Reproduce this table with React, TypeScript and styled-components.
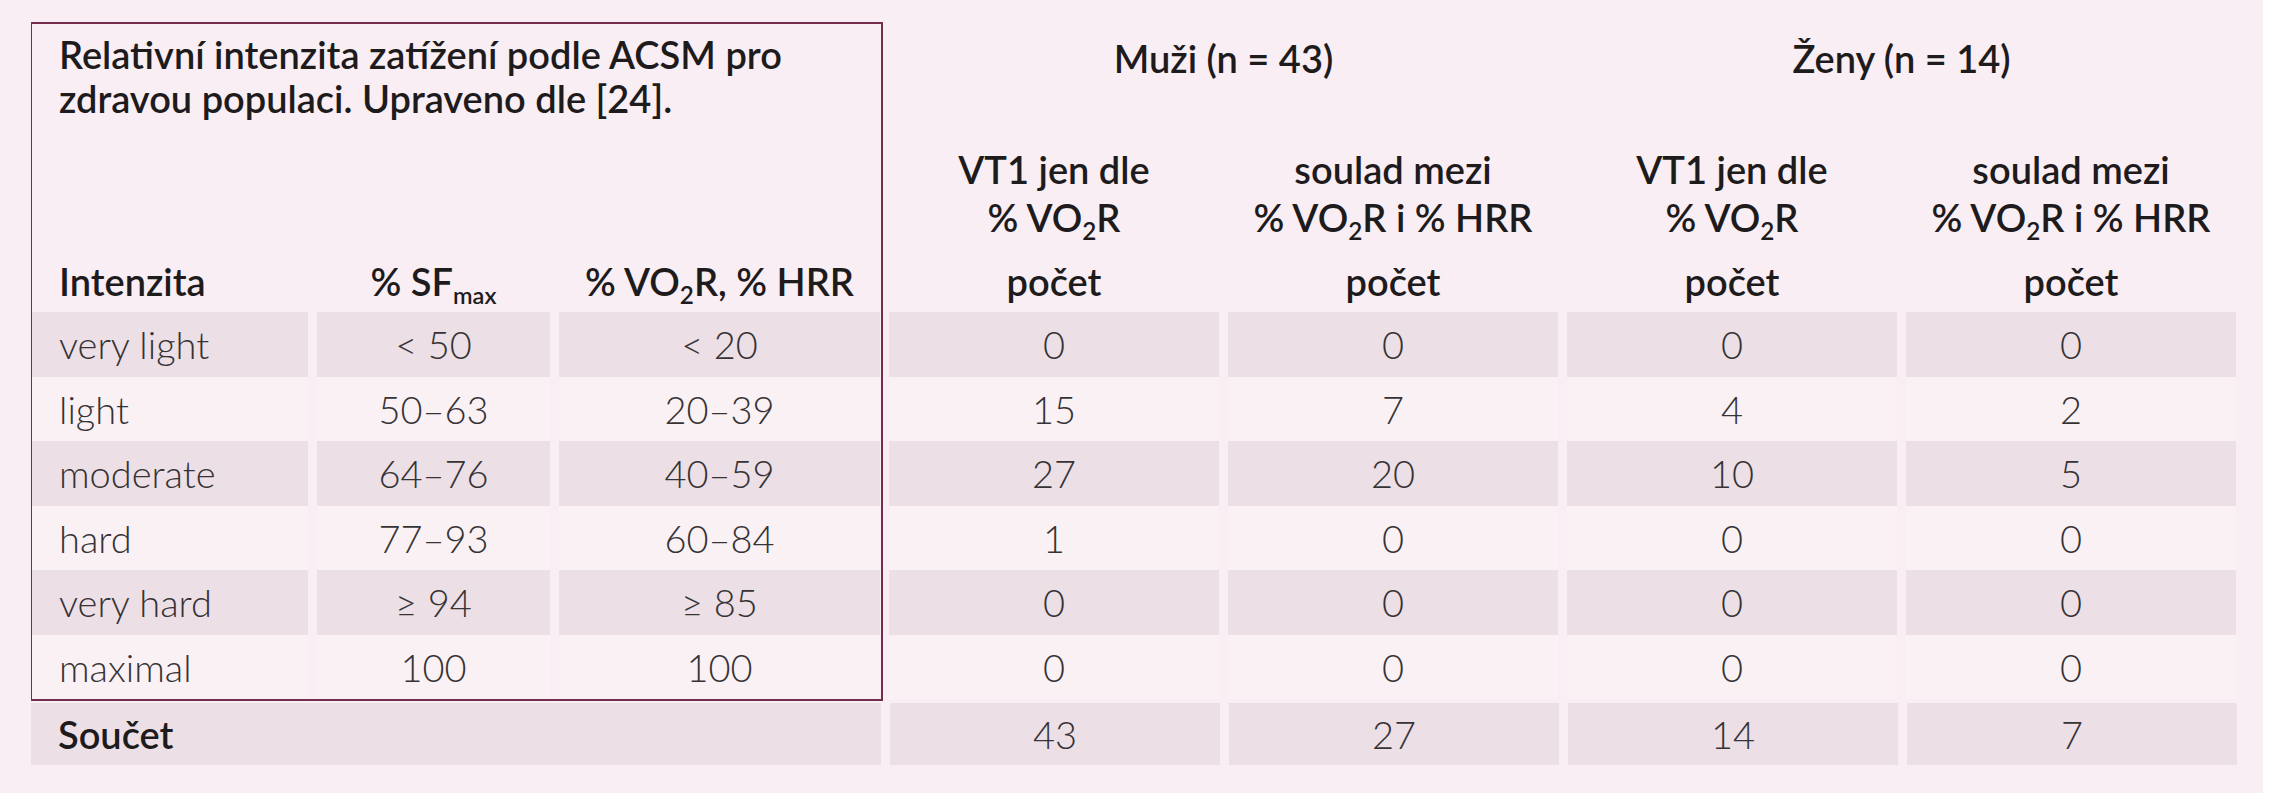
import React, { FC } from "react";
import styled, { createGlobalStyle } from "styled-components";

const GlobalStyle = createGlobalStyle`
  html, body {
    margin: 0;
    padding: 0;
    background: #ffffff;
  }
  body {
    font-family: Lato, "Open Sans", "Liberation Sans", sans-serif;
  }
`;

const STRIPE = "#eddfe6";
const LIGHT = "#faf1f5";

type Row = [string, string, string, number, number, number, number];

const rows: Row[] = [
  ["very light", "< 50", "< 20", 0, 0, 0, 0],
  ["light", "50–63", "20–39", 15, 7, 4, 2],
  ["moderate", "64–76", "40–59", 27, 20, 10, 5],
  ["hard", "77–93", "60–84", 1, 0, 0, 0],
  ["very hard", "≥ 94", "≥ 85", 0, 0, 0, 0],
  ["maximal", "100", "100", 0, 0, 0, 0],
];

const totals = [43, 27, 14, 7];

const Page = styled.div`
  width: 2263px;
  height: 793px;
  box-sizing: border-box;
  padding: 22px 0 0 31px;
  background: #f9eef3;
  color: #1e1b1d;
`;

const Top = styled.div`
  display: flex;
  align-items: flex-start;
`;

const Frame = styled.div`
  border: 2px solid #742d4d;
  border-left-width: 1.5px;
  padding-right: 1px;
`;

const rowTemplate = "106px 120px 62px repeat(6, 64.5px)";

const LeftGrid = styled.div`
  display: grid;
  grid-template-columns: 276px 233px 321px;
  grid-template-rows: ${rowTemplate};
  column-gap: 9px;
`;

const RightGrid = styled.div`
  display: grid;
  grid-template-columns: repeat(4, 330px);
  grid-template-rows: ${rowTemplate};
  column-gap: 9px;
  margin: 2px 0 0 6px;
`;

const Title = styled.div`
  grid-column: span 3;
  grid-row: span 2;
  padding: 8px 0 0 27px;
  font-size: 38px;
  line-height: 44px;
  font-weight: 600;
`;

const GroupHead = styled.div`
  grid-column: span 2;
  padding-top: 10px;
  text-align: center;
  font-size: 38px;
  line-height: 48px;
  font-weight: 600;
`;

const SubHead = styled.div`
  padding-top: 15px;
  text-align: center;
  font-size: 38px;
  line-height: 48px;
  font-weight: 600;
`;

const ColHead = styled.div<{ $left?: boolean }>`
  padding: 7px 0 0 ${({ $left }) => ($left ? "27px" : "0")};
  text-align: ${({ $left }) => ($left ? "left" : "center")};
  font-size: 38px;
  line-height: 48px;
  font-weight: 600;
  white-space: nowrap;
`;

const Sub = styled.sub<{ $small?: boolean }>`
  font-size: ${({ $small }) => ($small ? "0.62em" : "0.64em")};
  vertical-align: -0.32em;
  line-height: 0;
  font-weight: 600;
`;

const Cell = styled.div<{ $stripe: boolean; $left?: boolean }>`
  display: flex;
  align-items: center;
  justify-content: ${({ $left }) => ($left ? "flex-start" : "center")};
  padding-left: ${({ $left }) => ($left ? "27px" : "0")};
  background: ${({ $stripe }) => ($stripe ? STRIPE : LIGHT)};
  font-size: 38px;
  font-weight: 300;
  color: #363335;
  white-space: nowrap;
`;

const SumRow = styled.div`
  display: grid;
  grid-template-columns: 850px repeat(4, 330px);
  grid-template-rows: 62px;
  column-gap: 9px;
  margin-top: 2px;
`;

const SumLabel = styled(Cell)`
  font-weight: 600;
  color: #1e1b1d;
`;

const App: FC = () => {
  return (
    <>
      <GlobalStyle />
      <Page>
        <Top>
          <Frame>
            <LeftGrid>
              <Title>
                Relativní intenzita zatížení podle ACSM pro
                <br />
                zdravou populaci. Upraveno dle [24].
              </Title>

              <ColHead $left>Intenzita</ColHead>
              <ColHead>
                % SF<Sub $small>max</Sub>
              </ColHead>
              <ColHead>
                % VO<Sub>2</Sub>R, % HRR
              </ColHead>

              {rows.map((r, i) => (
                <React.Fragment key={r[0]}>
                  <Cell $stripe={i % 2 === 0} $left>
                    {r[0]}
                  </Cell>
                  <Cell $stripe={i % 2 === 0}>{r[1]}</Cell>
                  <Cell $stripe={i % 2 === 0}>{r[2]}</Cell>
                </React.Fragment>
              ))}
            </LeftGrid>
          </Frame>

          <RightGrid>
            <GroupHead>Muži (n = 43)</GroupHead>
            <GroupHead>Ženy (n = 14)</GroupHead>

            {[0, 1].map((g) => (
              <React.Fragment key={g}>
                <SubHead>
                  VT1 jen dle
                  <br />% VO<Sub>2</Sub>R
                </SubHead>
                <SubHead>
                  soulad mezi
                  <br />% VO<Sub>2</Sub>R i % HRR
                </SubHead>
              </React.Fragment>
            ))}

            {[0, 1, 2, 3].map((c) => (
              <ColHead key={c}>počet</ColHead>
            ))}

            {rows.map((r, i) => (
              <React.Fragment key={r[0]}>
                {r.slice(3).map((v, j) => (
                  <Cell key={j} $stripe={i % 2 === 0}>
                    {v}
                  </Cell>
                ))}
              </React.Fragment>
            ))}
          </RightGrid>
        </Top>

        <SumRow>
          <SumLabel $stripe $left>
            Součet
          </SumLabel>
          {totals.map((t, i) => (
            <Cell key={i} $stripe>
              {t}
            </Cell>
          ))}
        </SumRow>
      </Page>
    </>
  );
};

export default App;
